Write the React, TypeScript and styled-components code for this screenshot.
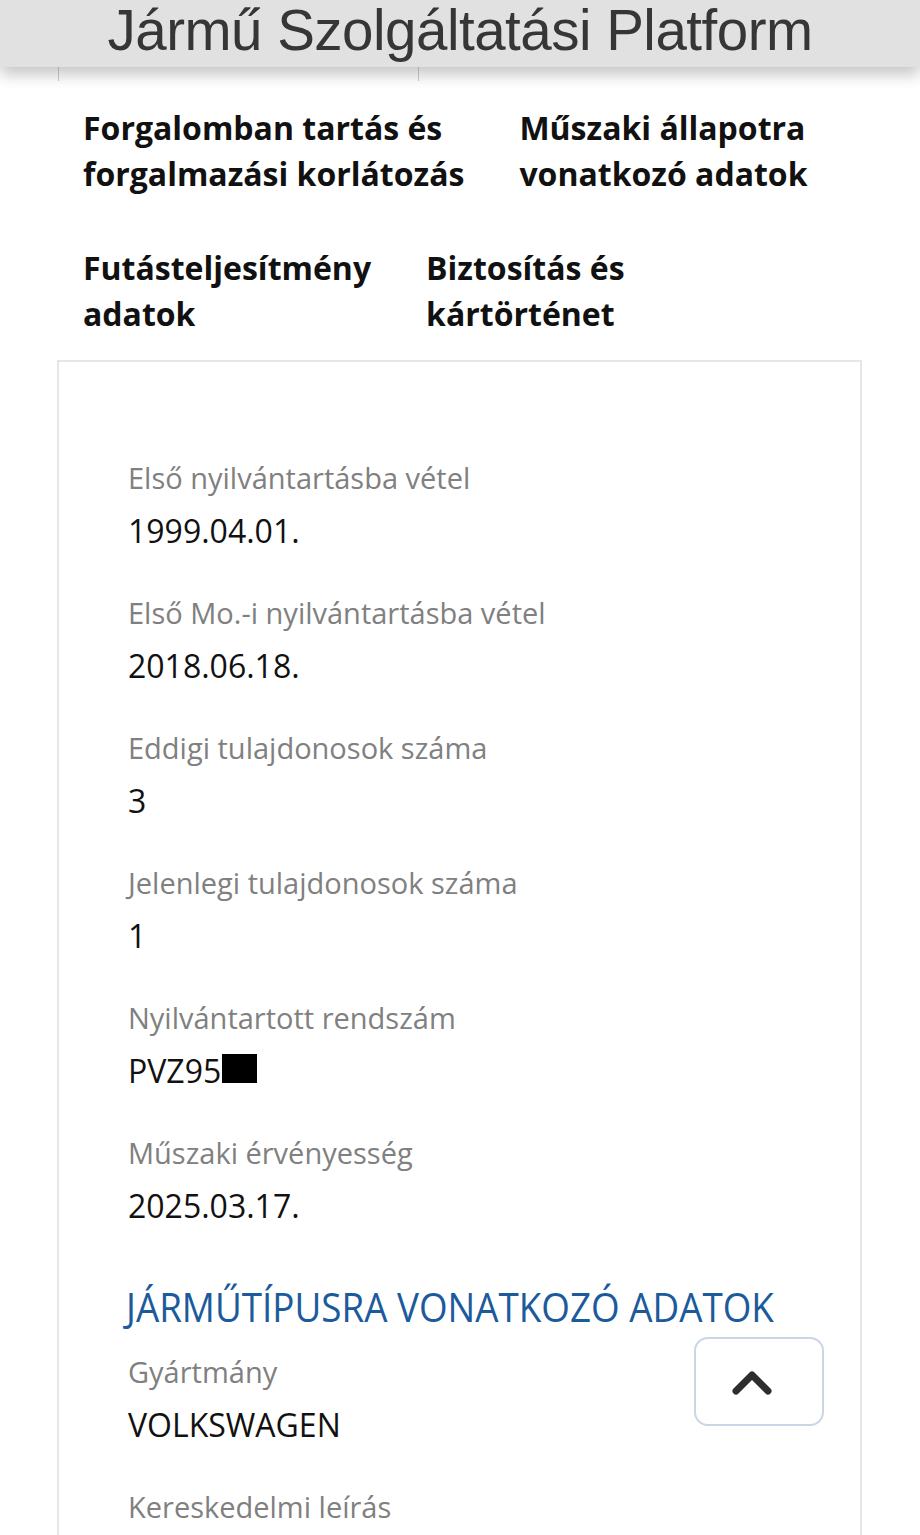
import React from 'react'
import styled, { createGlobalStyle } from 'styled-components'

const GlobalStyle = createGlobalStyle`
    html, body {
        margin: 0;
        padding: 0;
        background: #ffffff;
    }
    body {
        font-family: 'Open Sans', 'Noto Sans', sans-serif;
    }
`;

const Page = styled.div`
    min-height: 1535px;
    overflow: hidden;
`;

const Header = styled.header`
    position: sticky;
    top: 0;
    z-index: 10;
    height: 67px;
    background: #e1e1e1;
    box-shadow: 0 8px 14px rgba(0, 0, 0, 0.22);
    display: flex;
    justify-content: center;
    align-items: flex-start;
`;

const Title = styled.h1`
    margin: 0;
    font-family: 'Liberation Sans', Arial, sans-serif;
    font-weight: 400;
    font-size: 56.5px;
    line-height: 62px;
    color: #363636;
    letter-spacing: -0.5px;
`;

const Content = styled.main`
    padding: 0 58px 0 57px;
`;

const TabEdges = styled.div`
    display: flex;
    height: 14px;
    margin-left: 1px;
`;

const TabEdge = styled.div<{ $w: number }>`
    width: ${p => p.$w}px;
    border-left: 1px solid #cfcfcf;
`;

const Tabs = styled.nav`
    display: flex;
    flex-wrap: wrap;
    row-gap: 48px;
    padding: 24px 0 23px 1px;
`;

const Tab = styled.a`
    display: block;
    padding: 0 30px 0 25px;
    font-family: 'Open Sans', sans-serif;
    font-weight: 700;
    font-size: 32px;
    line-height: 46px;
    color: #111111;
    text-decoration: none;
`;

const Panel = styled.section`
    border: 2px solid #e6e6e6;
    border-bottom: none;
    padding: 96px 40px 60px 69px;
`;

const Field = styled.div`
    margin-bottom: 40px;
`;

const Label = styled.div`
    font-size: 29px;
    line-height: 40px;
    color: #808080;
    margin-bottom: 11px;
    white-space: nowrap;
`;

const Value = styled.div`
    font-size: 32px;
    line-height: 44px;
    color: #111111;
    display: flex;
    align-items: center;
    white-space: nowrap;
`;

const Redacted = styled.span`
    display: inline-block;
    width: 35px;
    height: 29px;
    background: #000000;
    margin-left: 1px;
    margin-top: -6px;
`;

const SectionTitle = styled.h2`
    margin: 54px 0 20px -2px;
    font-weight: 400;
    font-size: 40px;
    line-height: 50px;
    color: #1b5a9b;
    white-space: nowrap;
    transform-origin: left center;
    transform: scaleX(0.92);
`;

const ScrollTop = styled.button`
    position: fixed;
    left: 694px;
    top: 1337px;
    width: 130px;
    height: 89px;
    background: #ffffff;
    border: 2px solid #cad6e5;
    border-radius: 14px;
    display: flex;
    align-items: center;
    justify-content: center;
    padding: 0 14px 0 0;
    cursor: pointer;
`;

const fields = [
    { label: 'Első nyilvántartásba vétel', value: '1999.04.01.' },
    { label: 'Első Mo.-i nyilvántartásba vétel', value: '2018.06.18.' },
    { label: 'Eddigi tulajdonosok száma', value: '3' },
    { label: 'Jelenlegi tulajdonosok száma', value: '1' },
    { label: 'Nyilvántartott rendszám', value: 'PVZ95', redacted: true },
    { label: 'Műszaki érvényesség', value: '2025.03.17.' },
];

export default function App() {
    return (
        <Page>
            <GlobalStyle />
            <Header>
                <Title>Jármű Szolgáltatási Platform</Title>
            </Header>
            <Content>
                <TabEdges>
                    <TabEdge $w={359} />
                    <TabEdge $w={300} />
                </TabEdges>
                <Tabs>
                    <Tab>Forgalomban tartás és<br />forgalmazási korlátozás</Tab>
                    <Tab>Műszaki állapotra<br />vonatkozó adatok</Tab>
                    <Tab>Futásteljesítmény<br />adatok</Tab>
                    <Tab>Biztosítás és<br />kártörténet</Tab>
                </Tabs>
                <Panel>
                    {fields.map((f, idx) => (
                        <Field key={idx}>
                            <Label>{f.label}</Label>
                            <Value>
                                {f.value}
                                {f.redacted && <Redacted />}
                            </Value>
                        </Field>
                    ))}
                    <SectionTitle>JÁRMŰTÍPUSRA VONATKOZÓ ADATOK</SectionTitle>
                    <Field>
                        <Label>Gyártmány</Label>
                        <Value>VOLKSWAGEN</Value>
                    </Field>
                    <Field>
                        <Label>Kereskedelmi leírás</Label>
                    </Field>
                </Panel>
            </Content>
            <ScrollTop aria-label="Vissza a tetejére">
                <svg width="40" height="26" viewBox="0 0 40 26">
                    <path d="M4 22 L20 6 L36 22" fill="none" stroke="#2e2e2e" strokeWidth="7" strokeLinecap="round" strokeLinejoin="round" />
                </svg>
            </ScrollTop>
        </Page>
    );
}
